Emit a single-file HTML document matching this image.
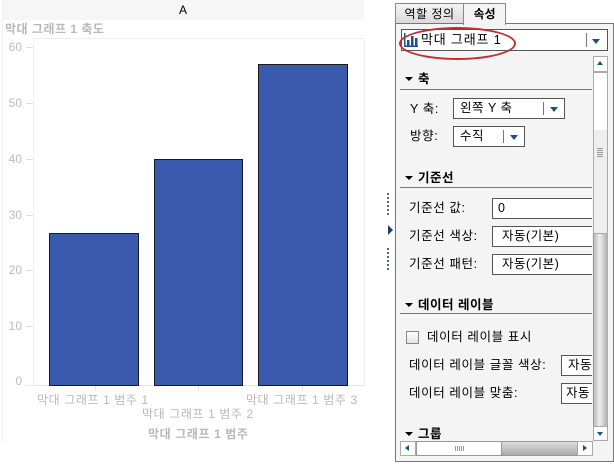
<!DOCTYPE html>
<html><head><meta charset="utf-8"><style>
*{margin:0;padding:0;box-sizing:border-box}
body{width:614px;height:464px;background:#fff;position:relative;overflow:hidden;font-family:"Liberation Sans","Noto Sans CJK KR","NanumGothic",sans-serif;font-size:12px;color:#000}
.a{position:absolute;white-space:nowrap}
.g{color:#b8b8b8}
.bar{position:absolute;background:#3a5aad;border:1px solid #1a1a1a}
.yl{position:absolute;left:0;width:22px;text-align:right;font-size:12px;color:#bbb;line-height:12px}
.tk{position:absolute;left:26px;width:7px;height:1px;background:#ddd}
.lbl{position:absolute;font-size:12.5px;line-height:14px;letter-spacing:0.6px;white-space:nowrap}
.box{position:absolute;background:#fff;border:1px solid #555;height:21px;font-size:12.5px;line-height:19px;padding-left:6px;letter-spacing:0.5px;white-space:nowrap;overflow:hidden}
.dd{position:absolute;top:3px;width:1px;height:13px;background:#777}
.tri{position:absolute;width:0;height:0;border-left:4px solid transparent;border-right:4px solid transparent;border-top:5px solid #1d4f8a}
.sec{position:absolute;left:405px;font-weight:bold;font-size:12.5px;letter-spacing:0.5px;white-space:nowrap}
.sec:before{content:"";display:inline-block;border-left:4px solid transparent;border-right:4px solid transparent;border-top:4px solid #000;margin-right:5px;vertical-align:2px}
.hr{position:absolute;left:400px;width:192px;height:1px;background:#777}
.cl{letter-spacing:0.6px}
</style></head><body>
<div class="a" style="left:2px;top:0;width:362px;height:20px;background:#f6f6f6;text-align:center;line-height:20px;font-size:12px">A</div>
<div class="a" style="left:2px;top:20px;width:1px;height:423px;background:#f0f0f0"></div>
<div class="a g" style="left:5px;top:22px;font-weight:bold;font-size:12px;line-height:14px;letter-spacing:0.5px">막대 그래프 1 축도</div>
<div class="a" style="left:33px;top:38px;width:332px;height:348px;border:1px solid #eee;border-bottom:1px solid #e6e6e6"></div>
<div class="yl" style="top:41px">60</div><div class="tk" style="top:47px"></div>
<div class="yl" style="top:97px">50</div><div class="tk" style="top:103px"></div>
<div class="yl" style="top:153px">40</div><div class="tk" style="top:159px"></div>
<div class="yl" style="top:209px">30</div><div class="tk" style="top:215px"></div>
<div class="yl" style="top:264px">20</div><div class="tk" style="top:270px"></div>
<div class="yl" style="top:320px">10</div><div class="tk" style="top:326px"></div>
<div class="yl" style="top:375px">0</div>
<div class="a" style="left:26px;top:385px;width:339px;height:1px;background:#e6e6e6"></div>
<div class="bar" style="left:49px;top:233px;width:90px;height:153px"></div>
<div class="bar" style="left:154px;top:159px;width:89px;height:227px"></div>
<div class="bar" style="left:258px;top:64px;width:90px;height:322px"></div>
<div class="a" style="left:95px;top:386px;width:1px;height:5px;background:#e6e6e6"></div>
<div class="a" style="left:198px;top:386px;width:1px;height:5px;background:#e6e6e6"></div>
<div class="a" style="left:302px;top:386px;width:1px;height:5px;background:#e6e6e6"></div>
<div class="a g cl" style="left:37px;top:393px;line-height:14px">막대 그래프 1 범주 1</div>
<div class="a g cl" style="left:142px;top:407px;line-height:14px">막대 그래프 1 범주 2</div>
<div class="a g cl" style="left:246px;top:393px;line-height:14px">막대 그래프 1 범주 3</div>
<div class="a g cl" style="left:148px;top:427px;font-weight:bold;line-height:14px">막대 그래프 1 범주</div>
<div class="a" style="left:387px;top:193px;width:2px;height:22px;border-left:2px dotted #4a6a9a"></div>
<div class="a" style="left:388px;top:225px;border-top:5px solid transparent;border-bottom:5px solid transparent;border-left:5px solid #1d3f70"></div>
<div class="a" style="left:387px;top:248px;width:2px;height:22px;border-left:2px dotted #4a6a9a"></div>
<div class="a" style="left:395px;top:3px;width:69px;height:22px;background:linear-gradient(#f4f4f4,#d8d8d8);border:1px solid #888;text-align:center;line-height:20px;letter-spacing:0.5px">역할 정의</div>
<div class="a" style="left:395px;top:23px;width:219px;height:439px;border:1px solid #777;background:#f4f4f4"></div>
<div class="a" style="left:463px;top:3px;width:43px;height:22px;background:#f4f4f4;border:1px solid #888;border-bottom:none;text-align:center;line-height:20px;font-weight:bold">속성</div>
<div class="a" style="left:401px;top:29px;width:207px;height:22px;background:#fff;border:1px solid #555"></div>
<svg class="a" style="left:404px;top:33px" width="14" height="14"><rect x="0" y="0" width="1.5" height="14" fill="#1d4f8a"/><rect x="0" y="12.5" width="14" height="1.5" fill="#1d4f8a"/><rect x="3" y="7" width="2.5" height="6" fill="#1d4f8a"/><rect x="7" y="3" width="2.5" height="10" fill="#1d4f8a"/><rect x="11" y="5" width="2.5" height="8" fill="#1d4f8a"/></svg>
<div class="a" style="left:421px;top:32px;font-size:13px;line-height:16px;letter-spacing:0.8px">막대 그래프 1</div>
<div class="a" style="left:586px;top:33px;width:1px;height:14px;background:#777"></div>
<div class="tri" style="left:592px;top:39px"></div>
<div class="a" style="left:399px;top:27px;width:117px;height:33px;border:2px solid #c03030;border-radius:50%"></div>
<div class="sec" style="top:68px">축</div>
<div class="hr" style="top:89px"></div>
<div class="lbl" style="left:410px;top:102px">Y 축:</div>
<div class="box" style="left:453px;top:98px;width:112px">왼쪽 Y 축<div class="dd" style="left:89px"></div><div class="tri" style="left:96px;top:8px"></div></div>
<div class="lbl" style="left:410px;top:129px">방향:</div>
<div class="box" style="left:453px;top:126px;width:72px">수직<div class="dd" style="left:49px"></div><div class="tri" style="left:56px;top:8px"></div></div>
<div class="sec" style="top:167px">기준선</div>
<div class="hr" style="top:187px"></div>
<div class="lbl" style="left:409px;top:201px">기준선 값:</div>
<div class="box" style="left:492px;top:198px;width:100px;padding-left:5px;border-right:none">0</div>
<div class="lbl" style="left:409px;top:229px">기준선 색상:</div>
<div class="box" style="left:492px;top:226px;width:100px;padding-left:9px;border-right:none">자동(기본)</div>
<div class="lbl" style="left:409px;top:257px">기준선 패턴:</div>
<div class="box" style="left:492px;top:254px;width:100px;padding-left:9px;border-right:none">자동(기본)</div>
<div class="sec" style="top:294px">데이터 레이블</div>
<div class="hr" style="top:313px"></div>
<div class="a" style="left:406px;top:331px;width:13px;height:13px;border:1px solid #888;background:linear-gradient(#fff,#e4e4e4)"></div>
<div class="lbl" style="left:427px;top:330px">데이터 레이블 표시</div>
<div class="lbl" style="left:409px;top:358px">데이터 레이블 글꼴 색상:</div>
<div class="box" style="left:561px;top:355px;width:31px;padding-left:6px;border-right:none">자동</div>
<div class="lbl" style="left:409px;top:386px">데이터 레이블 맞춤:</div>
<div class="box" style="left:561px;top:383px;width:31px;padding-left:4px;border-right:none">자동</div>
<div class="sec" style="top:423px">그룹</div>
<div class="a" style="left:593px;top:56px;width:15px;height:385px;background:linear-gradient(90deg,#bbb,#eee 40%,#aaa);border-left:1px solid #999"></div>
<div class="a" style="left:593px;top:56px;width:15px;height:16px;background:#fff;border:1px solid #aaa"></div>
<div class="a" style="left:597px;top:61px;border-left:3px solid transparent;border-right:3px solid transparent;border-bottom:4px solid #1d4f8a"></div>
<div class="a" style="left:593px;top:72px;width:15px;height:162px;background:linear-gradient(#fff 35%,#eee 36%);border:1px solid #aaa"></div>
<div class="a" style="left:597px;top:148px;width:6px;height:10px;background:repeating-linear-gradient(#999 0 1px,transparent 1px 2px)"></div>
<div class="a" style="left:593px;top:426px;width:15px;height:15px;background:#fff;border:1px solid #aaa"></div>
<div class="a" style="left:597px;top:432px;border-left:3px solid transparent;border-right:3px solid transparent;border-top:4px solid #1d4f8a"></div>
<div class="a" style="left:400px;top:441px;width:193px;height:15px;background:linear-gradient(#ddd,#aaa);border:1px solid #999"></div>
<div class="a" style="left:400px;top:441px;width:16px;height:15px;background:#fff;border:1px solid #aaa"></div>
<div class="a" style="left:405px;top:445px;border-top:3px solid transparent;border-bottom:3px solid transparent;border-right:4px solid #1d4f8a"></div>
<div class="a" style="left:416px;top:441px;width:86px;height:15px;background:#fff;border:1px solid #999;border-radius:2px"></div>
<div class="a" style="left:455px;top:446px;width:10px;height:5px;background:repeating-linear-gradient(90deg,#999 0 1px,transparent 1px 2px)"></div>
<div class="a" style="left:577px;top:441px;width:16px;height:15px;background:#fff;border:1px solid #aaa"></div>
<div class="a" style="left:583px;top:445px;border-top:3px solid transparent;border-bottom:3px solid transparent;border-left:4px solid #1d4f8a"></div>
</body></html>
